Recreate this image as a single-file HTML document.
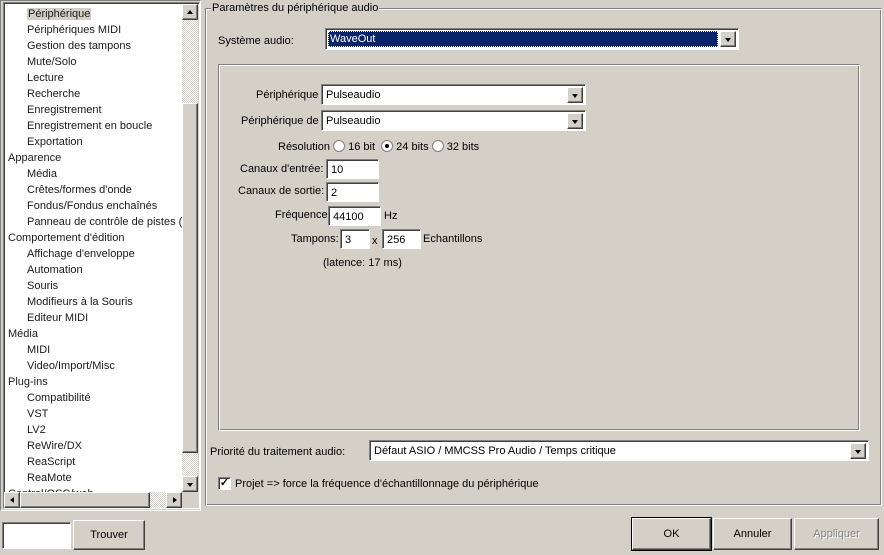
<!DOCTYPE html>
<html><head><meta charset="utf-8"><style>
*{box-sizing:border-box;margin:0;padding:0}
body{width:884px;height:555px;background:#d4d0c8;font-family:"Liberation Sans",Tahoma,sans-serif;font-size:11px;color:#000;position:relative;overflow:hidden}
.a{position:absolute;white-space:nowrap}
.sunk{border:1px solid;border-color:#808080 #fff #fff #808080;box-shadow:inset 1px 1px 0 #404040,inset -1px -1px 0 #d4d0c8}
.btn{background:#d4d0c8;border:1px solid;border-color:#fff #404040 #404040 #fff;box-shadow:inset -1px -1px 0 #808080;text-align:center}
.sb{background:#d4d0c8;border:1px solid;border-color:#fff #404040 #404040 #fff;box-shadow:inset -1px -1px 0 #808080;width:16px;height:16px}
.inp{background:#fff;border:1px solid;border-color:#808080 #fff #fff #808080;box-shadow:inset 1px 1px 0 #404040;padding:4px 0 0 4px;height:20px}
.combo{background:#fff;border:1px solid;border-color:#808080 #fff #fff #808080;box-shadow:inset 1px 1px 0 #404040;padding:4px 0 0 4px;height:21px}
.arr{position:absolute;right:2px;top:2px;width:16px;height:16px}
.tri{position:absolute;left:4px;top:6px;width:0;height:0;border-left:3.5px solid transparent;border-right:3.5px solid transparent;border-top:4px solid #000}
.radio{display:inline-block;width:12px;height:12px;border-radius:50%;background:#fff;border:1px solid #808080;vertical-align:-2px;position:relative}
.tree div{height:16px;line-height:16px}
</style></head><body>
<div class="a" style="left:0;top:0;width:201px;height:511px;border:1px solid;border-color:#808080 #fff #fff #808080"></div>
<div class="a sunk" style="left:3px;top:2px;width:197px;height:507px;background:#fff"></div>
<div class="a tree" style="left:8px;top:6px;width:174px;height:486px;overflow:hidden;color:#1a1a1a">
<div style="padding-left:19px"><span style="background:#d4d0c8;padding:0 1px">Périphérique</span></div>
<div style="padding-left:19px">Périphériques MIDI</div>
<div style="padding-left:19px">Gestion des tampons</div>
<div style="padding-left:19px">Mute/Solo</div>
<div style="padding-left:19px">Lecture</div>
<div style="padding-left:19px">Recherche</div>
<div style="padding-left:19px">Enregistrement</div>
<div style="padding-left:19px">Enregistrement en boucle</div>
<div style="padding-left:19px">Exportation</div>
<div>Apparence</div>
<div style="padding-left:19px">Média</div>
<div style="padding-left:19px">Crêtes/formes d'onde</div>
<div style="padding-left:19px">Fondus/Fondus enchaînés</div>
<div style="padding-left:19px">Panneau de contrôle de pistes (T</div>
<div>Comportement d'édition</div>
<div style="padding-left:19px">Affichage d'enveloppe</div>
<div style="padding-left:19px">Automation</div>
<div style="padding-left:19px">Souris</div>
<div style="padding-left:19px">Modifieurs à la Souris</div>
<div style="padding-left:19px">Editeur MIDI</div>
<div>Média</div>
<div style="padding-left:19px">MIDI</div>
<div style="padding-left:19px">Video/Import/Misc</div>
<div>Plug-ins</div>
<div style="padding-left:19px">Compatibilité</div>
<div style="padding-left:19px">VST</div>
<div style="padding-left:19px">LV2</div>
<div style="padding-left:19px">ReWire/DX</div>
<div style="padding-left:19px">ReaScript</div>
<div style="padding-left:19px">ReaMote</div>
<div>Control/OSC/web</div>
</div>
<div class="a" style="left:182px;top:4px;width:16px;height:488px;background:repeating-conic-gradient(#fff 0 25%,#d4d0c8 0 50%) 0 0/2px 2px"></div>
<div class="a sb" style="left:182px;top:4px"><div class="tri" style="border-top:none;border-bottom:4px solid #000;top:5px"></div></div>
<div class="a sb" style="left:182px;top:103px;height:350px"></div>
<div class="a sb" style="left:182px;top:476px"><div class="tri"></div></div>
<div class="a" style="left:4px;top:492px;width:178px;height:16px;background:repeating-conic-gradient(#fff 0 25%,#d4d0c8 0 50%) 0 0/2px 2px"></div>
<div class="a" style="left:182px;top:492px;width:16px;height:16px;background:#d4d0c8"></div>
<div class="a sb" style="left:4px;top:492px"><div style="position:absolute;left:5px;top:4px;border-top:3.5px solid transparent;border-bottom:3.5px solid transparent;border-right:4px solid #000"></div></div>
<div class="a sb" style="left:20px;top:492px;width:130px"></div>
<div class="a sb" style="left:166px;top:492px"><div style="position:absolute;left:6px;top:4px;border-top:3.5px solid transparent;border-bottom:3.5px solid transparent;border-left:4px solid #000"></div></div>
<div class="a" style="left:2px;top:522px;width:69px;height:27px;background:#fff;border:1px solid;border-color:#808080 #fff #fff #808080;box-shadow:inset 1px 1px 0 #404040"></div>
<div class="a btn" style="left:73px;top:520px;width:72px;height:30px;line-height:28px">Trouver</div>
<div class="a" style="left:205px;top:8px;width:677px;height:498px;border:1px solid;border-color:#808080 #fff #fff #808080;box-shadow:inset 1px 1px 0 #fff,inset -1px -1px 0 #808080"></div>
<div class="a" style="left:211px;top:2px;background:#d4d0c8;padding:0 1px">Paramètres du périphérique audio</div>
<div class="a" style="left:218px;top:35px">Système audio:</div>
<div class="a combo" style="left:325px;top:28px;width:414px;height:22px;padding:2px"><div style="background:#0a246a;color:#fff;height:16px;width:390px;outline:1px dotted #fff;outline-offset:-1px;padding:2px 0 0 2px">WaveOut</div><div class="sb arr"><div class="tri"></div></div></div>
<div class="a" style="left:218px;top:64px;width:642px;height:367px;border:1px solid;border-color:#808080 #fff #fff #808080;box-shadow:inset 1px 1px 0 #fff,inset -1px -1px 0 #808080"></div>
<div class="a" style="left:256px;top:89px">Périphérique</div>
<div class="a combo" style="left:321px;top:84px;width:265px"><span>Pulseaudio</span><div class="sb arr"><div class="tri"></div></div></div>
<div class="a" style="left:241px;top:115px">Périphérique de</div>
<div class="a combo" style="left:321px;top:110px;width:265px"><span>Pulseaudio</span><div class="sb arr"><div class="tri"></div></div></div>
<div class="a" style="left:278px;top:140px">Résolution <span class="radio"></span> 16 bit &nbsp;<span class="radio"><span style="position:absolute;left:3px;top:3px;width:4px;height:4px;background:#000;border-radius:50%"></span></span> 24 bits <span class="radio"></span> 32 bits</div>
<div class="a" style="left:240px;top:163px">Canaux d'entrée:</div>
<div class="a inp" style="left:326px;top:159px;width:53px">10</div>
<div class="a" style="left:238px;top:185px">Canaux de sortie:</div>
<div class="a inp" style="left:326px;top:182px;width:53px">2</div>
<div class="a" style="left:275px;top:209px">Fréquence</div>
<div class="a inp" style="left:328px;top:206px;width:53px">44100</div>
<div class="a" style="left:384px;top:210px">Hz</div>
<div class="a" style="left:291px;top:233px">Tampons:</div>
<div class="a inp" style="left:340px;top:229px;width:30px">3</div>
<div class="a" style="left:372px;top:235px">x</div>
<div class="a inp" style="left:382px;top:229px;width:39px">256</div>
<div class="a" style="left:423px;top:233px">Echantillons</div>
<div class="a" style="left:323px;top:257px">(latence: 17 ms)</div>
<div class="a" style="left:210px;top:446px">Priorité du traitement audio:</div>
<div class="a combo" style="left:369px;top:440px;width:500px"><span>Défaut ASIO / MMCSS Pro Audio / Temps critique</span><div class="sb arr"><div class="tri"></div></div></div>
<div class="a" style="left:218px;top:477px;width:13px;height:13px;background:#fff;border:1px solid;border-color:#808080 #fff #fff #808080;box-shadow:inset 1px 1px 0 #404040;font-size:11px;line-height:10px;text-align:center;font-weight:bold">✓</div>
<div class="a" style="left:235px;top:478px">Projet =&gt; force la fréquence d'échantillonnage du périphérique</div>
<div class="a btn" style="left:632px;top:518px;width:79px;height:32px;line-height:30px;outline:1px solid #000">OK</div>
<div class="a btn" style="left:713px;top:518px;width:79px;height:32px;line-height:30px">Annuler</div>
<div class="a btn" style="left:794px;top:518px;width:85px;height:32px;line-height:30px;color:#808080;text-shadow:1px 1px 0 #fff">Appliquer</div>
</body></html>
